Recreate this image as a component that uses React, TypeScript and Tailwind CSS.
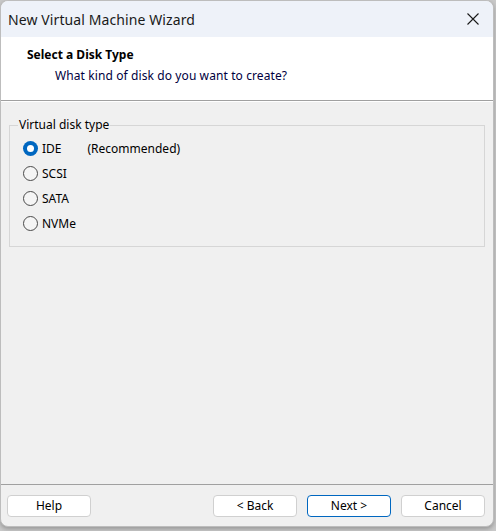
import React from "react";

function Radio({ checked }: { checked?: boolean }) {
  return checked ? (
    <span className="w-[15px] h-[15px] rounded-full bg-[#0067c0] flex items-center justify-center shrink-0">
      <span className="w-[7px] h-[7px] rounded-full bg-white" />
    </span>
  ) : (
    <span className="w-[15px] h-[15px] rounded-full border border-[#4a4a4a] bg-[#f5f5f5] shrink-0" />
  );
}

function Btn({ label, primary }: { label: string; primary?: boolean }) {
  return (
    <button
      className={
        "w-[84px] h-[22px] rounded-[4px] bg-white text-[12px] text-black flex items-center justify-center " +
        (primary ? "border border-[#0067c0]" : "border border-[#d0d0d0]")
      }
    >
      {label}
    </button>
  );
}

export default function App() {
  const font = { fontFamily: '"Noto Sans", "Open Sans", sans-serif' };
  return (
    <div className="w-[496px] h-[531px] bg-[#c9c9c9] overflow-hidden" style={font}>
      <div className="w-[494px] h-[527px] rounded-t-[8px] rounded-b-[8px] border border-[#bdbdbd] bg-[#f0f0f0] flex flex-col overflow-hidden shadow-[0_2px_4px_rgba(0,0,0,0.25)]">
        {/* Title bar */}
        <div className="h-[36px] bg-[#eef2f9] flex items-center justify-between pl-[7px] pr-[12px] shrink-0">
          <span className="text-[14px] text-[#1a1a1a] tracking-[0.1px]">New Virtual Machine Wizard</span>
          <svg width="14" height="14" viewBox="0 0 14 14" className="mr-[1px]">
            <path d="M1.5 1.5 L12.5 12.5 M12.5 1.5 L1.5 12.5" stroke="#1a1a1a" strokeWidth="1.1" />
          </svg>
        </div>
        {/* Header */}
        <div className="h-[64px] bg-white flex flex-col pl-[26px] pt-[9px] shrink-0 border-b border-[#a0a0a0]">
          <span className="text-[12px] font-bold text-black leading-[18px]">Select a Disk Type</span>
          <span className="text-[12px] text-[#000040] leading-[18px] pl-[28px] mt-[3px] tracking-[0.1px]">What kind of disk do you want to create?</span>
        </div>
        <div className="h-px bg-white shrink-0" />
        {/* Body */}
        <div className="flex-1 px-[8px] pt-[16px]">
          <fieldset className="border border-[#d6d6d6] h-[129px] pl-[13px] pt-[2px] m-0">
            <legend className="text-[12px] text-black px-[1px] ml-[-5px] leading-[14px]">Virtual disk type</legend>
            <div className="flex flex-col gap-[10px] mt-[7px]">
              <div className="flex items-center h-[15px]">
                <Radio checked />
                <span className="text-[12px] ml-[4px] text-black">IDE</span>
                <span className="text-[12px] ml-[26px] text-black">(Recommended)</span>
              </div>
              <div className="flex items-center h-[15px]">
                <Radio />
                <span className="text-[12px] ml-[4px] text-black">SCSI</span>
              </div>
              <div className="flex items-center h-[15px]">
                <Radio />
                <span className="text-[12px] ml-[4px] text-black">SATA</span>
              </div>
              <div className="flex items-center h-[15px]">
                <Radio />
                <span className="text-[12px] ml-[4px] text-black">NVMe</span>
              </div>
            </div>
          </fieldset>
        </div>
        {/* Footer */}
        <div className="h-px bg-[#a0a0a0] shrink-0" />
        <div className="h-[41px] flex items-start pt-[10px] pl-[6px] pr-[8px] shrink-0">
          <Btn label="Help" />
          <div className="flex-1" />
          <div className="flex gap-[10px]">
            <Btn label="< Back" />
            <Btn label="Next >" primary />
            <Btn label="Cancel" />
          </div>
        </div>
      </div>
    </div>
  );
}
